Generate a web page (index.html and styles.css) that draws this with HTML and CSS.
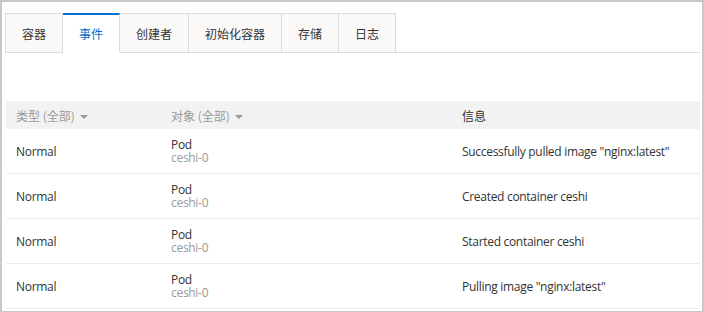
FILE: index.html
```html
<!DOCTYPE html>
<html lang="zh">
<head>
<meta charset="utf-8">
<link rel="stylesheet" href="styles.css">
</head>
<body>
<div class="frame">
  <div class="tabs">
    <div class="tab">容器</div>
    <div class="tab active">事件</div>
    <div class="tab">创建者</div>
    <div class="tab">初始化容器</div>
    <div class="tab">存储</div>
    <div class="tab">日志</div>
    <div class="tab-fill"></div>
  </div>
  <div class="table">
    <div class="row head">
      <div class="cell c1 filter">类型 (全部) <span class="caret"></span></div>
      <div class="cell c2 filter">对象 (全部) <span class="caret"></span></div>
      <div class="cell c3">信息</div>
    </div>
    <div class="row">
      <div class="cell c1">Normal</div>
      <div class="cell c2"><div class="kind">Pod</div><div class="name">ceshi-0</div></div>
      <div class="cell c3">Successfully pulled image "nginx:latest"</div>
    </div>
    <div class="row">
      <div class="cell c1">Normal</div>
      <div class="cell c2"><div class="kind">Pod</div><div class="name">ceshi-0</div></div>
      <div class="cell c3">Created container ceshi</div>
    </div>
    <div class="row">
      <div class="cell c1">Normal</div>
      <div class="cell c2"><div class="kind">Pod</div><div class="name">ceshi-0</div></div>
      <div class="cell c3">Started container ceshi</div>
    </div>
    <div class="row">
      <div class="cell c1">Normal</div>
      <div class="cell c2"><div class="kind">Pod</div><div class="name">ceshi-0</div></div>
      <div class="cell c3">Pulling image "nginx:latest"</div>
    </div>
  </div>
</div>
</body>
</html>
```
FILE: styles.css
```css
html, body {
  margin: 0;
  padding: 0;
  background: #fff;
}
body {
  font-family: "Open Sans", "Noto Sans CJK SC", sans-serif;
  font-size: 12px;
  color: #333;
}
.frame {
  box-sizing: border-box;
  width: 704px;
  height: 312px;
  border: 2px solid #c8c8c8;
  border-bottom-width: 1px;
  padding: 11px 2px 0 3px;
  overflow: hidden;
}
.tabs {
  display: flex;
  height: 40px;
}
.tab {
  box-sizing: border-box;
  height: 40px;
  padding: 0 16px;
  display: flex;
  align-items: center;
  justify-content: center;
  background: #faf9f8;
  border: 1px solid #dcdcdc;
  border-left-width: 0;
  font-size: 12px;
  color: #333;
  font-family: "Noto Sans CJK SC", sans-serif;
}
.tab:first-child {
  border-left-width: 1px;
}
.tab.active {
  background: #fff;
  color: #0070cc;
  border-top: 2px solid #0070cc;
  border-bottom-color: #fff;
}
.tab-fill {
  flex: 1;
  border-bottom: 1px solid #dcdcdc;
}
.table {
  margin-top: 48px;
  margin-left: 1px;
}
.row {
  display: flex;
  height: 45px;
  box-sizing: border-box;
  border-bottom: 1px solid #ebebeb;
  align-items: center;
}
.row.head {
  height: 28px;
  background: #f2f2f2;
  border-bottom: none;
}
.cell {
  box-sizing: border-box;
  padding: 0 10px;
  letter-spacing: -0.3px;
}
.c1 { width: 155px; }
.c2 { width: 291px; }
.c3 { flex: 1; }
.head .cell {
  font-family: "Noto Sans CJK SC", sans-serif;
  letter-spacing: 0;
}
.filter {
  color: #999;
}
.caret {
  display: inline-block;
  width: 0;
  height: 0;
  border-left: 4px solid transparent;
  border-right: 4px solid transparent;
  border-top: 4px solid #999;
  vertical-align: middle;
  margin-left: 2px;
}
.kind {
  line-height: 13px;
  color: #333;
}
.name {
  line-height: 13px;
  color: #999;
}
```
